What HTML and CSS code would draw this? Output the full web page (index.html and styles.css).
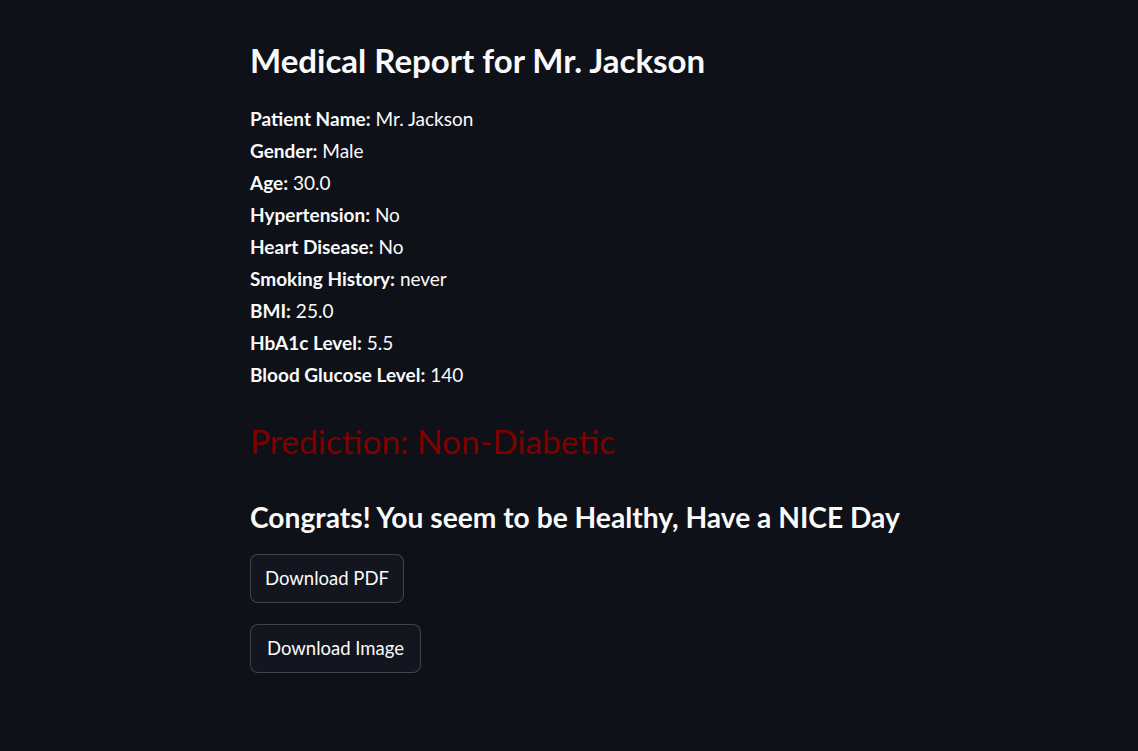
FILE: index.html
```html
<!DOCTYPE html>
<html lang="en">
<head>
<meta charset="utf-8">
<title>Medical Report</title>
<link rel="stylesheet" href="styles.css">
</head>
<body>
<main class="block">
  <h1 class="title">Medical Report for Mr. Jackson</h1>
  <div class="details">
    <p class="line"><strong>Patient Name:</strong> Mr. Jackson</p>
    <p class="line"><strong>Gender:</strong> Male</p>
    <p class="line"><strong>Age:</strong> 30.0</p>
    <p class="line"><strong>Hypertension:</strong> No</p>
    <p class="line"><strong>Heart Disease:</strong> No</p>
    <p class="line"><strong>Smoking History:</strong> never</p>
    <p class="line"><strong>BMI:</strong> 25.0</p>
    <p class="line"><strong>HbA1c Level:</strong> 5.5</p>
    <p class="line"><strong>Blood Glucose Level:</strong> 140</p>
  </div>
  <h2 class="prediction">Prediction: Non-Diabetic</h2>
  <h3 class="message">Congrats! You seem to be Healthy, Have a NICE Day</h3>
  <div class="actions">
    <button class="btn" type="button">Download PDF</button>
    <button class="btn btn-wide" type="button">Download Image</button>
  </div>
</main>
</body>
</html>
```

FILE: styles.css
```css
html, body {
  margin: 0;
  padding: 0;
  background: #0e1117;
  height: 100%;
}
body {
  color: #fafafa;
  font-family: "Source Sans Pro", Lato, "Noto Sans", sans-serif;
}
.block {
  width: 736px;
  margin: 0 auto;
  padding: 0 48px 0 49px;
  box-sizing: border-box;
  display: flex;
  flex-direction: column;
  align-items: flex-start;
}
.title {
  margin: 39px 0 0;
  font-size: 33px;
  line-height: 42px;
  font-weight: 700;
  white-space: nowrap;
}
.details {
  margin-top: 22px;
  display: flex;
  flex-direction: column;
}
.line {
  margin: 0;
  font-size: 19px;
  line-height: 32px;
  white-space: nowrap;
}
.line strong {
  font-weight: 700;
}
.prediction {
  margin: 30px 0 0;
  font-size: 33.5px;
  line-height: 41px;
  font-weight: 400;
  color: #800000;
  white-space: nowrap;
}
.message {
  margin: 37px 0 0;
  font-size: 28.2px;
  line-height: 36px;
  font-weight: 700;
  white-space: nowrap;
}
.actions {
  margin-top: 19px;
  display: flex;
  flex-direction: column;
  align-items: flex-start;
  gap: 21px;
}
.btn {
  height: 49px;
  padding: 0 14px;
  border: 1px solid rgba(250, 250, 250, 0.2);
  border-radius: 8px;
  background: #13161e;
  color: #fafafa;
  font-family: inherit;
  font-size: 18.5px;
  line-height: 1.6;
}
.btn-wide {
  padding: 0 16px;
}
```
